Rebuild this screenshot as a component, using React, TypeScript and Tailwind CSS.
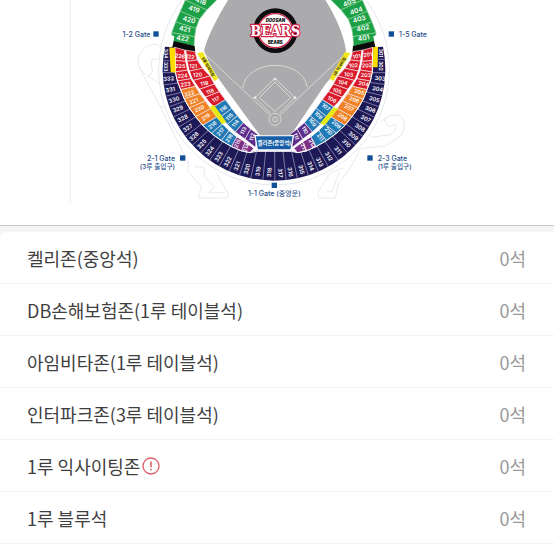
import React from "react";

type Pt = [number, number];
type Label = [string, number, number];

const CX = 642;
const CY = 209;
const AXIS = 1283;

const NAVY = "#1d1956";
const RED = "#d91c2b";
const ORANGE = "#f08124";
const BLUE = "#1f7ab5";
const PURPLE = "#5c2d8c";
const PLUM = "#7b2f86";
const GREEN = "#1ba045";

const flip = ([x, y]: Pt): Pt => [AXIS - x, y];
const pts = (list: Pt[]) => list.map((p) => p.join(",")).join(" ");

const infieldRow: [Pt, Pt][] = [
  [[374, 150], [405, 155]],
  [[378, 184], [412, 180]],
  [[384, 214], [428, 205]],
  [[397, 242], [450, 228]],
  [[416, 269], [463, 252]],
  [[433, 293], [478, 275]],
  [[462, 320], [496, 299]],
  [[483, 350], [515, 325]],
  [[502, 373], [532, 347]],
  [[526, 396], [550, 368]],
  [[555, 417], [572, 387]],
  [[586, 442], [594, 404]],
];
const infieldColors = [RED, RED, RED, RED, RED, RED, BLUE, BLUE, BLUE, PURPLE, PURPLE];

const middleRow: [Pt, Pt][] = [
  [[344, 142], [374, 150]],
  [[346, 182], [377, 184]],
  [[346, 216], [383, 210]],
  [[352, 243], [393, 236]],
  [[362, 269], [406, 259]],
  [[373, 297], [420, 281]],
  [[388, 324], [436, 303]],
  [[407, 350], [452, 326]],
  [[428, 376], [470, 351]],
  [[454, 400], [488, 372]],
  [[484, 422], [508, 390]],
  [[515, 440], [532, 408]],
  [[545, 453], [556, 425]],
  [[570, 458], [582, 444]],
];
const middleColors = [RED, RED, RED, RED, ORANGE, ORANGE, ORANGE, ORANGE, BLUE, BLUE, BLUE, PLUM, PLUM];

const outfieldRow: [Pt, Pt][] = [
  [[392, -34], [470, 0]],
  [[376, 0], [440, 30]],
  [[361, 34], [418, 58]],
  [[347, 66], [408, 85]],
  [[335, 98], [404, 110]],
  [[338, 124], [402, 139]],
];

const middleEdge = middleRow.map(([o]) => o);

const infieldLeft: Label[] = [
  ["122", 391, 170], ["121", 400, 198], ["120", 413, 224], ["119", 433, 250], ["118", 450, 274], ["117", 467, 298],
  ["116", 490, 326], ["115", 508, 350], ["114", 526, 370], ["113", 550, 392], ["112", 576, 411],
];
const infieldRight: Label[] = [
  ["101", 890, 169], ["102", 880, 196], ["103", 866, 223], ["104", 849, 247], ["105", 832, 272], ["106", 816, 298],
  ["107", 798, 321], ["108", 776, 346], ["109", 758, 367], ["110", 735, 390], ["111", 709, 409],
];
const middleLeft: Label[] = [
  ["226", 360, 168], ["225", 361, 198], ["224", 368, 227], ["223", 377, 253], ["222", 388, 280], ["221", 401, 303],
  ["220", 418, 326], ["219", 437, 351], ["218", 457, 375], ["217", 481, 395], ["216", 507, 414], ["215", 532, 430], ["214", 558, 443],
];
const middleRight: Label[] = [
  ["201", 923, 164], ["202", 921, 196], ["203", 918, 225], ["204", 911, 251], ["205", 898, 276], ["206", 883, 299],
  ["207", 867, 323], ["208", 848, 350], ["209", 829, 373], ["210", 806, 393], ["211", 781, 412], ["212", 757, 430], ["213", 732, 443],
];
const outerLabels: Label[] = [
  ["332", 326, 236], ["331", 331, 269], ["330", 342, 299], ["329", 354, 327], ["328", 368, 355], ["327", 383, 384],
  ["326", 402, 409], ["325", 425, 432], ["324", 449, 453], ["323", 476, 470], ["322", 503, 485], ["321", 531, 498],
  ["320", 561, 507], ["319", 594, 514], ["318", 628, 517], ["317", 661, 519], ["316", 691, 516], ["315", 724, 509],
  ["314", 752, 498], ["313", 779, 486], ["312", 806, 469], ["311", 834, 451], ["310", 859, 430], ["309", 880, 408],
  ["308", 900, 383], ["307", 917, 356], ["306", 931, 328], ["305", 943, 298], ["304", 953, 267], ["303", 960, 235],
];
const outfieldLabels: Label[] = [
  ["418", 422, 4], ["419", 402, 28], ["420", 387, 60], ["421", 374, 88], ["422", 368, 116],
  ["405", 868, 8], ["404", 889, 33], ["403", 898, 58], ["402", 909, 85], ["401", 911, 115],
];

function tilt(x: number, y: number, factor = 1) {
  const side = x < CX ? -1 : 1;
  const deg = (Math.atan2(y - CY, Math.abs(x - CX)) * 180) / Math.PI;
  return Math.round(deg * side * factor);
}

function Labels({ items, size, factor = 1 }: { items: Label[]; size: number; factor?: number }) {
  return (
    <g fill="#fff" fontSize={size} fontWeight={600} textAnchor="middle">
      {items.map(([t, x, y]) => (
        <text key={t} x={x} y={y} dominantBaseline="central" transform={`rotate(${tilt(x, y, factor)} ${x} ${y})`}>
          {t}
        </text>
      ))}
    </g>
  );
}

function Band({ rows, colors, stroke = "#f6e9ee" }: { rows: [Pt, Pt][]; colors: string[]; stroke?: string }) {
  const cells = rows.slice(1).map((next, i) => [rows[i][0], rows[i][1], next[1], next[0]] as Pt[]);
  return (
    <g stroke={stroke} strokeWidth={2}>
      {cells.map((cell, i) => (
        <React.Fragment key={i}>
          <polygon points={pts(cell)} fill={colors[i]} />
          <polygon points={pts(cell.map(flip))} fill={colors[i]} />
        </React.Fragment>
      ))}
    </g>
  );
}

function separatorLines() {
  return outerLabels.slice(1).map(([t, x, y], i) => {
    const [, px, py] = outerLabels[i];
    const a = Math.atan2((y + py) / 2 - CY, (x + px) / 2 - CX);
    return (
      <line key={t} x1={CX + Math.cos(a) * 336} y1={CY + Math.sin(a) * 336} x2={CX + Math.cos(a) * 225} y2={CY + Math.sin(a) * 225} />
    );
  });
}

function Roads() {
  return (
    <g fill="none" stroke="#e9eaee" strokeWidth={3}>
      <path d="M312 150 L292 134 Q262 128 246 154 Q226 180 240 208 L262 228 Q284 220 274 196 Q270 172 292 178" />
      <path d="M240 208 L300 318 L312 322 M300 318 L386 490 M262 228 L300 252" />
      <path d="M386 484 L384 514 L424 560 L416 594 L500 594 L506 584 L470 520 M402 500 L432 502 L434 530 L462 560 L448 578 L494 578" />
      <path d="M896 446 L976 438 L1024 406 Q1042 372 1024 350 Q1000 338 976 354 L958 370 M976 354 Q972 376 992 380 L1006 372 Q1014 392 992 404 L930 412" />
      <path d="M900 450 L866 512 L836 548 L826 594 L776 594 L774 576 L812 518 L850 504 M798 576 L816 574 L838 516" />
    </g>
  );
}

type GateProps = { x: number; y: number; tx: number; ty: number; anchor: "start" | "middle" | "end"; lines: string[] };

function Gate({ x, y, tx, ty, anchor, lines }: GateProps) {
  return (
    <g>
      <rect x={x - 8} y={y - 8} width={16} height={16} fill="#10509a" />
      {lines.map((line, i) => (
        <text key={line} x={tx} y={ty + i * 26} textAnchor={anchor} dominantBaseline="central" fontSize={i ? 20 : 21} fontWeight={500} fill="#1c4c8c">
          {line}
        </text>
      ))}
    </g>
  );
}

function StadiumMap() {
  const inner = [...middleEdge, [590, 452] as Pt, [694, 452] as Pt, ...middleEdge.map(flip).reverse()];
  const navy = `M315 140 A334 334 0 1 0 969 140 L${inner.slice().reverse().map((p) => p.join(" ")).join(" L")} Z`;
  return (
    <svg viewBox="-180 0 1662 675" className="block h-auto w-full font-['Inter','Noto_Sans_CJK_KR',sans-serif]" role="img" aria-label="야구장 좌석 배치도">
      <line x1={31} y1={0} x2={31} y2={612} stroke="#ececee" strokeWidth={3} />
      <Roads />
      <circle cx={CX} cy={CY} r={346} fill="#fff" stroke="#d9dce6" strokeWidth={2} />

      <clipPath id="outer-ring">
        <path d={navy} />
      </clipPath>
      <path d={navy} fill={NAVY} />
      <g clipPath="url(#outer-ring)" stroke="#a9a7c9" strokeWidth={2}>
        {separatorLines()}
        <path d="M306 218 H346 M937 218 H980 M306 182 H328 M955 178 H980" />
      </g>

      <Band rows={outfieldRow} colors={[GREEN, GREEN, GREEN, GREEN, GREEN]} stroke="#8fd0a0" />
      <polygon points="322,104 343,108 340,128 318,126" fill="#fff" />
      <polygon points="961,104 940,108 943,128 965,126" fill="#fff" />
      <polygon points="341,123 404,138 406,158 337,142" fill="#0b0b0b" />
      <polygon points="942,123 879,138 877,158 946,142" fill="#0b0b0b" />

      <Band rows={middleRow} colors={middleColors} />
      <Band rows={infieldRow} colors={infieldColors} />
      <g fill="none" stroke="#fff" strokeWidth={5} strokeLinejoin="round">
        <polyline points={pts([...middleEdge, [590, 454], [694, 454], ...middleEdge.map(flip).reverse()])} strokeWidth={3} />
        <polyline points="376,152 380,184 386,212 396,238 416,266 434,291 456,321 489,371 508,390 532,410 556,425 586,446" />
        <polyline points="907,152 903,184 897,212 887,238 867,266 849,291 827,321 794,371 775,390 751,410 727,425 697,446" />
      </g>
      <path d="M328 142 L345 144 L347 218 L332 216 Z M940 142 L954 140 L953 202 L938 202 Z" fill="#fddc00" />
      <path d="M448 321 L462 315 L499 366 L486 373 Z M834 326 L821 322 L780 370 L794 376 Z" fill="#e6ea12" />

      <path d="M585 407 H700 L693 450 H592 Z" fill="#175ea6" stroke="#fff" strokeWidth={4} />
      <text x={643} y={429} textAnchor="middle" dominantBaseline="central" fontSize={16} fontWeight={700} fill="#fff">
        켈리존(중앙석)
      </text>

      <path d="M504 0 C478 44 444 104 432 152 Q452 206 490 256 L600 406 H692 L794 256 Q838 206 858 152 C852 104 824 44 796 0 Z" fill="#ababad" />
      <g fill="none" stroke="#ececec" strokeWidth={2}>
        <path d="M428 156 L630 346 M861 156 L660 346" />
        <path d="M548 264 C560 176 726 172 742 262" />
        <path d="M645 235 L585 293 L632 340 M645 235 L705 293 L658 340 M598 293 L645 246 L692 293 L645 334 Z" />
        <path d="M585 289 l4 4 l-4 4 l-4 -4 Z M705 289 l4 4 l-4 4 l-4 -4 Z M645 233 l4 4 l-4 4 l-4 -4 Z" fill="#ececec" />
        <circle cx={645} cy={358} r={18} />
        <circle cx={645} cy={358} r={7} />
      </g>

      <polygon points="411,160 428,156 474,236 464,243" fill="#f1e51c" />
      <polygon points="871,160 855,156 809,236 820,243" fill="#f1e51c" />
      <g fontSize={12} fontWeight={700} fill="#222" textAnchor="middle">
        <text x={444} y={200} dominantBaseline="central" transform="rotate(60 444 200)">3루 익사이팅</text>
        <text x={839} y={200} dominantBaseline="central" transform="rotate(-60 839 200)">1루 익사이팅</text>
      </g>

      <Labels items={outfieldLabels} size={20} factor={0.5} />
      <Labels items={infieldLeft} size={16} />
      <Labels items={infieldRight} size={16} />
      <Labels items={middleLeft} size={16} />
      <Labels items={middleRight} size={16} />
      <Labels items={outerLabels} size={17} />
      <g fill="#fff" fontSize={15} fontWeight={600} textAnchor="middle">
        <text x={319} y={161} dominantBaseline="central" transform="rotate(90 319 161)">334</text>
        <text x={318} y={200} dominantBaseline="central" transform="rotate(90 318 200)">333</text>
        <text x={963} y={159} dominantBaseline="central" transform="rotate(90 963 159)">301</text>
        <text x={964} y={198} dominantBaseline="central" transform="rotate(90 964 198)">302</text>
      </g>

      <circle cx={646} cy={92} r={60} fill="#fff" stroke="#0d0d10" strokeWidth={14} />
      <circle cx={646} cy={92} r={51} fill="#fff" stroke="#d0284a" strokeWidth={4} />
      <g textAnchor="middle">
        <text x={646} y={60} dominantBaseline="central" fontSize={13} fontWeight={900} fontStyle="italic" fill="#111">DOOSAN</text>
        <text x={646} y={126} dominantBaseline="central" fontSize={13} fontWeight={900} fill="#111">BEARS</text>
        <text
          x={646}
          y={107}
          fontSize={42}
          fontWeight={700}
          fill="#fff"
          stroke="#cf2448"
          strokeWidth={7}
          paintOrder="stroke"
          strokeLinejoin="round"
          className="font-['DejaVu_Serif_Condensed','DejaVu_Serif',serif]"
        >
          BEARS
        </text>
      </g>

      <Gate x={288} y={102} tx={271} ty={103} anchor="end" lines={["1-2 Gate"]} />
      <Gate x={994} y={102} tx={1017} ty={103} anchor="start" lines={["1-5 Gate"]} />
      <Gate x={368} y={474} tx={345} ty={476} anchor="end" lines={["2-1 Gate", "(3루 출입구)"]} />
      <Gate x={930} y={474} tx={953} ty={476} anchor="start" lines={["2-3 Gate", "(1루 출입구)"]} />
      <Gate x={643} y={556} tx={643} ty={579} anchor="middle" lines={["1-1 Gate (중앙문)"]} />
    </svg>
  );
}

const zones = [
  { name: "켈리존(중앙석)", seats: 0 },
  { name: "DB손해보험존(1루 테이블석)", seats: 0 },
  { name: "아임비타존(1루 테이블석)", seats: 0 },
  { name: "인터파크존(3루 테이블석)", seats: 0 },
  { name: "1루 익사이팅존", seats: 0, notice: true },
  { name: "1루 블루석", seats: 0 },
];

function NoticeIcon() {
  return (
    <svg viewBox="0 0 18 18" className="h-[18px] w-[18px]" fill="none" stroke="#dc5a64" aria-hidden="true">
      <circle cx="9" cy="9" r="8" strokeWidth="1.3" />
      <path d="M9 4.6V10.2M9 11.8V13.3" strokeWidth="1.5" />
    </svg>
  );
}

export default function App() {
  return (
    <main className="min-h-screen bg-white font-['Noto_Sans_CJK_KR',sans-serif]">
      <section className="border-b border-[#c9c9c9]">
        <StadiumMap />
      </section>
      <div className="bg-[#f5f5f5] pt-1.5">
        <ul className="rounded-tl-md bg-white">
          {zones.map((zone) => (
            <li key={zone.name} className="border-b border-[#f3f3f3]">
              <button type="button" className="flex h-[51px] w-full items-center justify-between pr-7 pl-[27px] text-left text-lg">
                <span className="flex items-center gap-0.5 text-[#3f3f3f]">
                  {zone.name}
                  {zone.notice && <NoticeIcon />}
                </span>
                <span className="text-[#999]">{zone.seats}석</span>
              </button>
            </li>
          ))}
        </ul>
      </div>
    </main>
  );
}
